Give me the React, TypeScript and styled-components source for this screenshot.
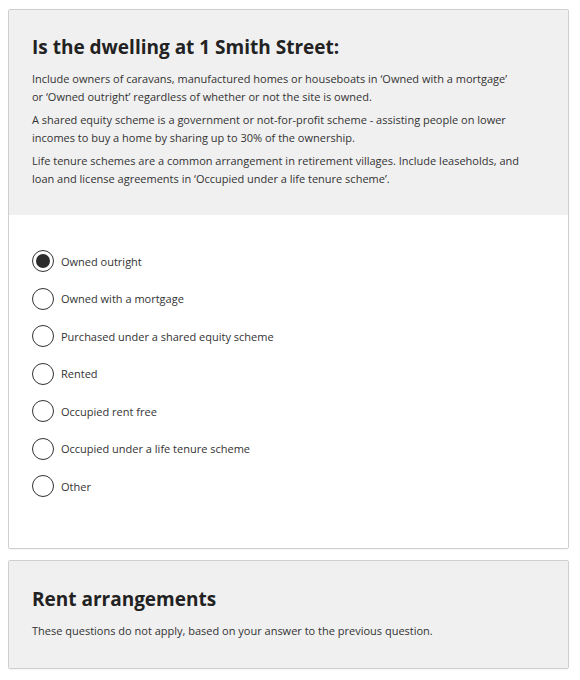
import React, { useState } from 'react';
import styled, { createGlobalStyle } from 'styled-components';

const GlobalStyle = createGlobalStyle`
  body {
    margin: 0;
    background: #ffffff;
    font-family: "Open Sans", "Noto Sans", sans-serif;
    color: #333;
  }
`;

const Page = styled.div`
  padding: 9px 11px 12px 8px;
  display: flex;
  flex-direction: column;
  gap: 11px;
`;

const Card = styled.section`
  border: 1px solid #cfcfcf;
  border-radius: 2px;
  background: #fff;
  box-shadow: 0 1px 1px rgba(0, 0, 0, 0.04);
  overflow: hidden;
`;

const Header = styled.div<{ $compact?: boolean }>`
  background: #f0f0f0;
  padding: ${p => (p.$compact ? '24px 23px 28px' : '23px 23px 27px')};
`;

const Title = styled.h2`
  margin: 0 0 9px 0;
  font-size: 19px;
  line-height: 28px;
  font-weight: 700;
  color: #222;
`;

const Para = styled.p`
  margin: 0 0 5px 0;
  font-size: 11px;
  line-height: 18px;
  color: #333;

  &:last-child {
    margin-bottom: 0;
  }
`;

const Options = styled.div`
  padding: 35px 23px 51px;
  display: flex;
  flex-direction: column;
  gap: 15.5px;
`;

const Option = styled.label`
  display: flex;
  align-items: center;
  gap: 7px;
  cursor: pointer;
  font-size: 11px;
  color: #333;
  height: 22px;
`;

const Circle = styled.span<{ $checked: boolean }>`
  width: 22px;
  height: 22px;
  box-sizing: border-box;
  border: 1.5px solid #333;
  border-radius: 50%;
  display: flex;
  align-items: center;
  justify-content: center;
  flex-shrink: 0;

  &::after {
    content: '';
    width: 14px;
    height: 14px;
    border-radius: 50%;
    background: #2b2b2b;
    display: ${p => (p.$checked ? 'block' : 'none')};
  }
`;

const HiddenInput = styled.input`
  position: absolute;
  opacity: 0;
  width: 0;
  height: 0;
`;

const options = [
  'Owned outright',
  'Owned with a mortgage',
  'Purchased under a shared equity scheme',
  'Rented',
  'Occupied rent free',
  'Occupied under a life tenure scheme',
  'Other',
];

export default function App() {
  const [selected, setSelected] = useState('Owned outright');

  return (
    <>
      <GlobalStyle />
      <Page>
        <Card>
          <Header>
            <Title>Is the dwelling at 1 Smith Street:</Title>
            <Para>
              Include owners of caravans, manufactured homes or houseboats in ‘Owned with a mortgage’
              <br />
              or ‘Owned outright’ regardless of whether or not the site is owned.
            </Para>
            <Para>
              A shared equity scheme is a government or not-for-profit scheme - assisting people on lower
              <br />
              incomes to buy a home by sharing up to 30% of the ownership.
            </Para>
            <Para>
              Life tenure schemes are a common arrangement in retirement villages. Include leaseholds, and
              <br />
              loan and license agreements in ‘Occupied under a life tenure scheme’.
            </Para>
          </Header>
          <Options>
            {options.map(o => (
              <Option key={o}>
                <HiddenInput
                  type="radio"
                  name="dwelling"
                  checked={selected === o}
                  onChange={() => setSelected(o)}
                />
                <Circle $checked={selected === o} />
                {o}
              </Option>
            ))}
          </Options>
        </Card>
        <Card>
          <Header $compact>
            <Title>Rent arrangements</Title>
            <Para>These questions do not apply, based on your answer to the previous question.</Para>
          </Header>
        </Card>
      </Page>
    </>
  );
}
